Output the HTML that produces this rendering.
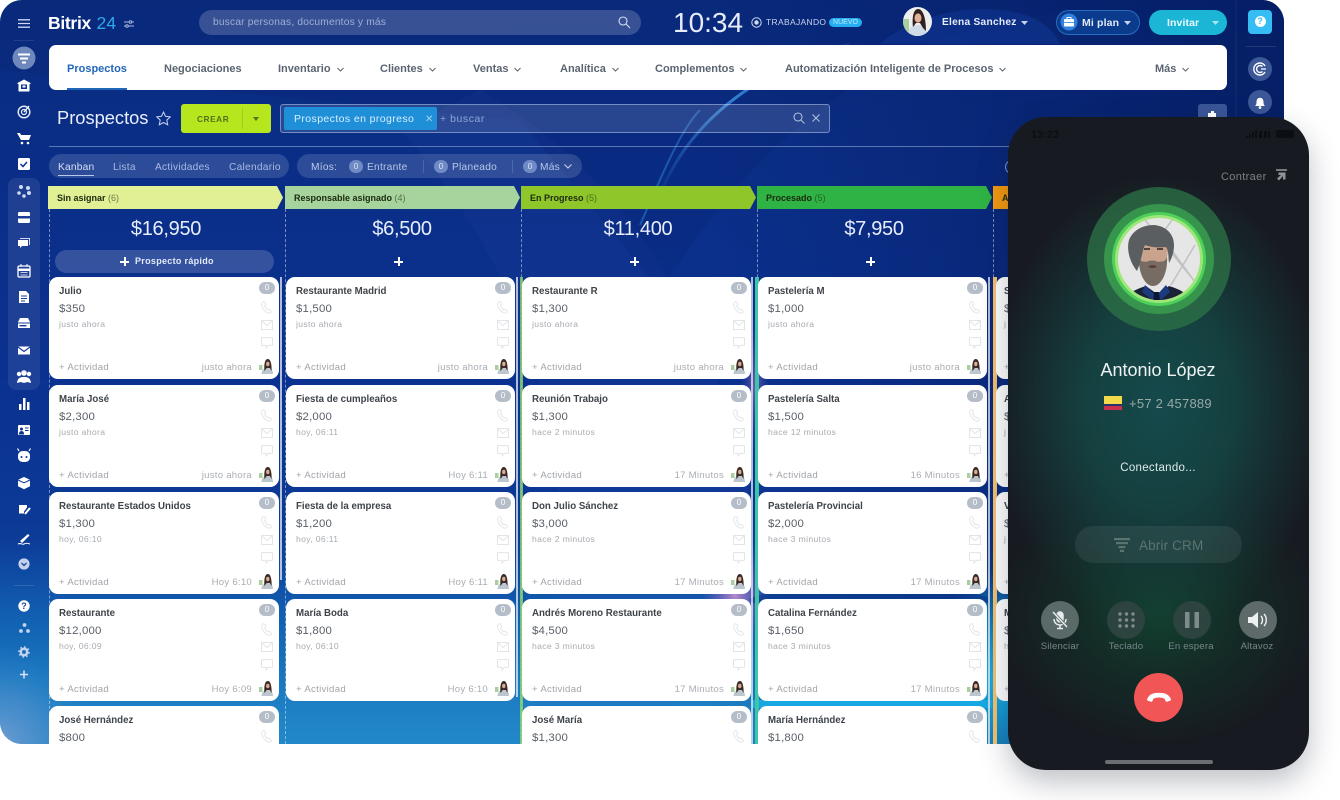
<!DOCTYPE html>
<html lang="es"><head><meta charset="utf-8"><title>Bitrix 24</title>
<style>
html,body{margin:0;padding:0;background:#fff}
body{width:1340px;height:800px;position:relative;overflow:hidden;font-family:"Liberation Sans",sans-serif}
*{box-sizing:border-box}
.a{position:absolute;white-space:nowrap}
#app{position:absolute;left:0;top:0;width:1284px;height:744px;border-radius:22px;overflow:hidden;background:linear-gradient(180deg,#0a2c80 0,#0b3190 50%,#0c3a97 72%,#1263b3 84%,#1c7cc2 93%,#2288c8 100%)}
.nav{position:absolute;top:63px;font-size:11px;line-height:13px;font-weight:bold;color:#5b6470;white-space:nowrap}
.nav svg{margin-left:6px;vertical-align:0}
.stage{position:absolute;top:186px;height:23px;width:235px;clip-path:polygon(0 0,229px 0,235px 11.5px,229px 23px,0 23px);font-size:9px;line-height:24px;font-weight:bold;color:#1c2a10;padding-left:9px;white-space:nowrap}
.stage i{font-style:normal;font-weight:normal;opacity:.6}
.total{position:absolute;top:217px;width:230px;text-align:center;color:#e8eefc;font-size:20px;line-height:24px;letter-spacing:-.3px}
.dash{position:absolute;top:209px;height:535px;width:0;border-left:1px dashed rgba(255,255,255,.45)}
.bar{position:absolute;top:277px;width:2px;height:303px;background:rgba(235,238,242,.75)}
.plus{position:absolute;top:257px;width:9px;height:9px;background:linear-gradient(#fff,#fff) center/9px 2px no-repeat,linear-gradient(#fff,#fff) center/2px 9px no-repeat}
.c{position:absolute;width:230px;height:102px;background:#fff;border-radius:9px;color:#333}
.c>*{position:absolute;white-space:nowrap}
.c.x{width:229px}
.t{left:10px;top:8px;font-size:9.7px;line-height:13px;font-weight:bold;color:#3f444a}
.p{left:10px;top:25px;font-size:11.4px;line-height:14px;color:#5a6068;letter-spacing:.2px}
.h{left:10px;top:41px;font-size:8.6px;line-height:12px;color:#a7abb0;letter-spacing:.35px}
.d{left:10px;top:84px;font-size:9.6px;line-height:13px;color:#a0a4a9;letter-spacing:.3px}
.r{right:27px;top:84px;font-size:9.6px;line-height:13px;color:#a9adb2;letter-spacing:.25px}
.b{left:210px;top:5px;width:16px;height:12px;border-radius:6px;background:#b5bdc8;color:#fff;font-size:8px;line-height:12px;text-align:center}
.i1{left:212px;top:24px}.i2{left:212px;top:43px}.i3{left:212px;top:60px}.av{left:209px;top:81px}
.x .b{left:209px}.x .i1,.x .i2,.x .i3{left:211px}.x .av{left:208px}
.y .t,.y .p,.y .h,.y .d{left:8px}
.rb{position:absolute;top:601px;width:38px;height:38px;border-radius:50%}
.rl{position:absolute;top:641px;width:70px;text-align:center;font-size:9.6px;line-height:12px;color:#78858a;letter-spacing:.2px}
</style></head>
<body>
<svg width="0" height="0" style="position:absolute">
<defs>
<symbol id="ph" viewBox="0 0 12 13"><path d="M1.5 1.2c1-.7 1.900-.6 2.400.3l.7 1.500c.2.500 0 1-.5 1.300l-.5.400c.6 1.700 1.700 3.100 3.300 4.200l.6-.4c.5-.3 1-.2 1.400.2l1.100 1.100c.6.7.4 1.500-.4 2-1.200.8-3 .3-4.900-1.200C2.200 8.700.4 5.500.6 3c0-.8.400-1.400.9-1.800z" fill="none" stroke="#e2e4e8" stroke-width=".9"/></symbol>
<symbol id="ml" viewBox="0 0 12 10"><rect x=".5" y=".5" width="11" height="9" fill="none" stroke="#e2e4e8"/><path d="M.8 1l5.200 4.500L11.200 1" fill="none" stroke="#e2e4e8"/></symbol>
<symbol id="ch" viewBox="0 0 12 12"><path d="M1 .6h10c.3 0 .5.200.5.500v6.800c0 .3-.2.500-.5.500H7.200L5 11V8.400H1c-.3 0-.5-.2-.5-.5V1.100c0-.3.200-.5.500-.5z" fill="none" stroke="#e2e4e8"/></symbol>
<symbol id="av" viewBox="0 0 16 16"><rect x="1" y="7" width="3.500" height="5" fill="#a9cf9f"/><path d="M3.500 16c0-3.500 2-6 6-6s5.500 2.500 5.500 6z" fill="#bcc6cf"/><path d="M6.500 13c-.5-4-.3-12 3.200-12s4 7 4 12l-2-3-3 0z" fill="#3b2a26"/><ellipse cx="9.800" cy="6" rx="1.700" ry="2.200" fill="#d9ac92"/></symbol>
</defs>
</svg>

<div id="app">
<svg class="a" style="left:0;top:0" width="1284" height="744" viewBox="0 0 1284 744">
<defs>
<linearGradient id="dk" x1="0" x2="1" y1="0" y2="0"><stop offset=".55" stop-color="#061f68" stop-opacity="0"/><stop offset="1" stop-color="#051c60" stop-opacity=".85"/></linearGradient>
<radialGradient id="pk"><stop offset="0" stop-color="#c98fd0" stop-opacity=".9"/><stop offset="1" stop-color="#7a50c0" stop-opacity="0"/></radialGradient>
<radialGradient id="bl" cx="0" cy="1" r="1"><stop offset="0" stop-color="#6f9dd2"/><stop offset=".5" stop-color="#4f8ecb" stop-opacity=".6"/><stop offset="1" stop-color="#1f80c4" stop-opacity="0"/></radialGradient>
<radialGradient id="cy"><stop offset="0" stop-color="#16b4e8"/><stop offset="1" stop-color="#16b4e8" stop-opacity="0"/></radialGradient>
<linearGradient id="al" x1="0" x2="1" y1="1" y2="0"><stop offset="0" stop-color="#2f7fd8" stop-opacity=".1"/><stop offset=".5" stop-color="#3a8fe0" stop-opacity=".85"/><stop offset="1" stop-color="#3a8fe0" stop-opacity=".1"/></linearGradient>
</defs>
<rect width="1284" height="744" fill="url(#dk)"/>
<path d="M0 0H1284V44C1120 -10 980 10 880 70C770 130 700 230 660 290L520 120L0 70Z" fill="#071f6a" opacity=".2"/>
<path d="M480 90C640 180 760 380 760 620L640 744H520C600 560 560 300 400 130Z" fill="#3a5fb8" opacity=".08"/>
<path d="M662 190C700 100 790 60 850 44" fill="none" stroke="url(#al)" stroke-width="3"/>
<path d="M640 225C660 180 680 130 700 110" fill="none" stroke="#2a77cc" stroke-width="2" opacity=".6"/>
<path d="M880 44C930 0 1040 -5 1060 44" fill="#123a9c" opacity=".45"/>
<ellipse cx="735" cy="595" rx="34" ry="60" fill="url(#pk)"/>
<ellipse cx="755" cy="385" rx="14" ry="70" fill="url(#pk)" opacity=".55"/>
<rect x="0" y="644" width="100" height="100" fill="url(#bl)"/>
<ellipse cx="1000" cy="680" rx="70" ry="110" fill="url(#cy)"/>
<ellipse cx="870" cy="600" rx="120" ry="12" fill="#0a2c80" opacity=".5"/>
<rect x="752" y="700" width="240" height="8" fill="#16a8e0"/>
<line x1="1236" y1="0" x2="1236" y2="744" stroke="#fff" stroke-opacity=".06"/>
</svg>

<!-- top bar -->
<svg class="a" style="left:18px;top:19px" width="12" height="9"><path d="M0 .8h12M0 4.500h12M0 8.200h12" stroke="#cdd8f0" stroke-width="1.300"/></svg>
<div class="a" style="left:48px;top:11px;font-size:17.500px;line-height:24px;font-weight:bold;color:#fff;letter-spacing:-.3px">Bitrix <span style="color:#2fa8ee;font-weight:normal;letter-spacing:.2px;margin-left:1px">24</span></div>
<svg class="a" style="left:124px;top:20px" width="10" height="8"><path d="M0 2h10M0 6h10" stroke="#a8b8dc"/><circle cx="6.500" cy="2" r="1.300" fill="#0a2c80" stroke="#a8b8dc"/><circle cx="3" cy="6" r="1.300" fill="#0a2c80" stroke="#a8b8dc"/></svg>
<div class="a" style="left:199px;top:10px;width:442px;height:25px;border-radius:13px;background:rgba(255,255,255,.19)"></div>
<div class="a" style="left:213px;top:16px;font-size:10.200px;line-height:14px;color:#9eb0d6;letter-spacing:.2px">buscar personas, documentos y más</div>
<svg class="a" style="left:618px;top:16px" width="13" height="13" fill="none" stroke="#d5deef" stroke-width="1.100"><circle cx="5" cy="5" r="4"/><path d="M8 8l4 4"/></svg>
<div class="a" style="left:673px;top:6px;font-size:28px;line-height:34px;color:#e6ecfb">10:34</div>
<svg class="a" style="left:751px;top:17px" width="11" height="11" fill="none"><circle cx="5.500" cy="5.500" r="4.700" stroke="#d0dbf2"/><circle cx="5.500" cy="5.500" r="2.200" fill="#d0dbf2"/></svg>
<div class="a" style="left:766px;top:16px;font-size:8.500px;line-height:13px;color:#c8d4ee;letter-spacing:.32px">TRABAJANDO</div>
<div class="a" style="left:829px;top:18px;width:33px;height:9px;border-radius:5px;background:#26aef2;color:#bfeaff;font-size:7px;line-height:9px;text-align:center">NUEVO</div>
<svg class="a" style="left:903px;top:7px" width="29" height="29" viewBox="0 0 29 29"><defs><clipPath id="ca"><circle cx="14.500" cy="14.500" r="14.500"/></clipPath></defs><g clip-path="url(#ca)"><rect width="29" height="29" fill="#eef0f0"/><rect x="0" y="12" width="6" height="14" fill="#a9cf9f"/><path d="M5 29c0-7 3-11 10-11s9 4 9 11z" fill="#cfdbe6"/><path d="M10 20C9 12 10 2 15 2s8 9 8 22l-3-3-3-5h-4z" fill="#33211d"/><ellipse cx="15" cy="11" rx="3.500" ry="4.600" fill="#dfb29a"/></g></svg>
<div class="a" style="left:942px;top:16px;font-size:10.200px;line-height:14px;font-weight:bold;color:#e6edfb;letter-spacing:.25px">Elena Sanchez</div>
<svg class="a" style="left:1021px;top:21px" width="7" height="4"><path d="M0 0h7L3.500 4z" fill="#c7d3ee"/></svg>
<div class="a" style="left:1056px;top:10px;width:84px;height:25px;border-radius:13px;border:1px solid #2a6cc0;background:#0b3b8c"></div>
<svg class="a" style="left:1060px;top:13px" width="18" height="18"><circle cx="9" cy="9" r="8.500" fill="#2f80e0"/><rect x="4" y="6" width="10" height="7.500" rx="1" fill="#fff"/><rect x="7" y="4.500" width="4" height="2" fill="none" stroke="#fff"/><path d="M4 9.500h10" stroke="#2f80e0" stroke-width=".8"/></svg>
<div class="a" style="left:1082px;top:16px;font-size:10.500px;line-height:14px;font-weight:bold;color:#dfe9fb;letter-spacing:.15px">Mi plan</div>
<svg class="a" style="left:1124px;top:21px" width="7" height="4"><path d="M0 0h7L3.500 4z" fill="#c7d3ee"/></svg>
<div class="a" style="left:1149px;top:10px;width:78px;height:25px;border-radius:13px;background:#1bb5d6"></div>
<div class="a" style="left:1167px;top:16px;font-size:10.500px;line-height:14px;font-weight:bold;color:#e8fbff;letter-spacing:.1px">Invitar</div>
<svg class="a" style="left:1212px;top:21px" width="7" height="4"><path d="M0 0h7L3.500 4z" fill="#a9e6f2"/></svg>

<!-- right rail -->
<div class="a" style="left:1248px;top:10px;width:24px;height:24px;border-radius:4px;background:#36bdf4"></div>
<div class="a" style="left:1254.500px;top:16px;width:11px;height:11px;border-radius:50%;background:#fff;color:#36bdf4;font-size:9px;line-height:11px;font-weight:bold;text-align:center">?</div>
<div class="a" style="left:1246px;top:46px;width:30px;height:1px;background:rgba(255,255,255,.12)"></div>
<svg class="a" style="left:1248px;top:57px" width="24" height="24"><circle cx="12" cy="12" r="12" fill="#3b5797"/><path d="M17 9a6 6 0 1 0 0 6M14.500 9.500a3.500 3.500 0 1 0 0 5" fill="none" stroke="#fff" stroke-width="1.400"/><path d="M13 12h5" stroke="#fff" stroke-width="1.300"/></svg>
<svg class="a" style="left:1248px;top:90px" width="24" height="24"><circle cx="12" cy="12" r="12" fill="#3b5797"/><path d="M7 16c1.200-1 1.500-2 1.500-4.200 0-2.200 1.400-4 3.500-4s3.500 1.800 3.500 4c0 2.200.3 3.200 1.500 4.200z" fill="#fff"/><circle cx="12" cy="17.500" r="1.400" fill="#fff"/></svg>

<!-- nav panel -->
<div class="a" style="left:49px;top:45px;width:1178px;height:45px;border-radius:7px;background:#fff"></div>
<div class="a" style="left:67px;top:88px;width:60px;height:2px;background:#2067b8"></div>
<div class="nav" style="left:67px;color:#2067b8">Prospectos</div>
<div class="nav" style="left:164px">Negociaciones</div>
<div class="nav" style="left:278px">Inventario<svg width="7" height="5"><path d="M.5 1l3 3 3-3" fill="none" stroke="#5b6470"/></svg></div>
<div class="nav" style="left:380px">Clientes<svg width="7" height="5"><path d="M.5 1l3 3 3-3" fill="none" stroke="#5b6470"/></svg></div>
<div class="nav" style="left:473px">Ventas<svg width="7" height="5"><path d="M.5 1l3 3 3-3" fill="none" stroke="#5b6470"/></svg></div>
<div class="nav" style="left:560px">Analítica<svg width="7" height="5"><path d="M.5 1l3 3 3-3" fill="none" stroke="#5b6470"/></svg></div>
<div class="nav" style="left:655px">Complementos<svg width="7" height="5"><path d="M.5 1l3 3 3-3" fill="none" stroke="#5b6470"/></svg></div>
<div class="nav" style="left:785px">Automatización Inteligente de Procesos<svg width="7" height="5"><path d="M.5 1l3 3 3-3" fill="none" stroke="#5b6470"/></svg></div>
<div class="nav" style="left:1155px">Más<svg width="7" height="5"><path d="M.5 1l3 3 3-3" fill="none" stroke="#5b6470"/></svg></div>

<!-- toolbar -->
<div class="a" style="left:57px;top:105px;font-size:18.300px;line-height:26px;color:#e9effd">Prospectos</div>
<svg class="a" style="left:156px;top:111px" width="15" height="15" viewBox="0 0 15 15"><path d="M7.500 1l2 4.300 4.700.6-3.400 3.200.9 4.700-4.200-2.300-4.200 2.300.9-4.700L.8 5.900l4.700-.6z" fill="none" stroke="#c9d5f0"/></svg>
<div class="a" style="left:181px;top:104px;width:90px;height:29px;border-radius:3px;background:#b6e61e"></div>
<div class="a" style="left:197px;top:113px;font-size:8.300px;line-height:13px;font-weight:bold;color:#56701a;letter-spacing:.55px">CREAR</div>
<div class="a" style="left:242px;top:108px;width:1px;height:21px;background:#a3cc20"></div>
<svg class="a" style="left:253px;top:117px" width="6" height="4"><path d="M0 0h6L3 4z" fill="#56701a"/></svg>
<div class="a" style="left:280px;top:104px;width:550px;height:29px;border-radius:3px;background:rgba(255,255,255,.13);border:1px solid rgba(190,210,245,.5)"></div>
<div class="a" style="left:284px;top:107px;width:153px;height:23px;border-radius:2px;background:#1f8fd8"></div>
<div class="a" style="left:294px;top:112px;font-size:10.500px;line-height:14px;color:#d8efff;letter-spacing:.4px">Prospectos en progreso</div>
<div class="a" style="left:425px;top:113px;font-size:10px;line-height:14px;color:#9dd2f2">✕</div>
<div class="a" style="left:440px;top:112px;font-size:10.500px;line-height:14px;color:#8ea6d2;letter-spacing:.55px">+ buscar</div>
<svg class="a" style="left:793px;top:112px" width="12" height="12" fill="none" stroke="#aebfdf" stroke-width="1.100"><circle cx="5" cy="5" r="4"/><path d="M8 8l3.500 3.500"/></svg>
<svg class="a" style="left:812px;top:114px" width="8" height="8" stroke="#aebfdf" stroke-width="1.100"><path d="M.5.500l7 7M7.500.500l-7 7"/></svg>
<div class="a" style="left:1198px;top:104px;width:29px;height:29px;border-radius:3px;background:#3a5697"></div>
<div class="a" style="left:1208px;top:113px;width:8px;height:5px;background:#fff"></div>
<div class="a" style="left:1210.500px;top:111px;width:3px;height:3px;background:#fff"></div>
<div class="a" style="left:49px;top:146px;width:960px;height:1px;background:rgba(190,210,245,.45)"></div>

<div class="a" style="left:49px;top:154px;width:240px;height:24px;border-radius:12px;background:rgba(255,255,255,.14)"></div>
<div class="a" style="left:58px;top:161px;font-size:10.200px;line-height:13px;color:#d5e0f6;letter-spacing:.2px;border-bottom:1px solid #b8c8e8;padding-bottom:1px">Kanban</div>
<div class="a" style="left:113px;top:161px;font-size:10.200px;line-height:13px;color:#a8bbe0;letter-spacing:.25px">Lista</div>
<div class="a" style="left:155px;top:161px;font-size:10.200px;line-height:13px;color:#a8bbe0;letter-spacing:.25px">Actividades</div>
<div class="a" style="left:229px;top:161px;font-size:10.200px;line-height:13px;color:#a8bbe0;letter-spacing:.25px">Calendario</div>
<div class="a" style="left:297px;top:154px;width:285px;height:24px;border-radius:12px;background:rgba(255,255,255,.14)"></div>
<div class="a" style="left:311px;top:161px;font-size:10.200px;line-height:13px;color:#bccbe8;letter-spacing:.25px">Míos:</div>
<div class="a" style="left:349px;top:160px;width:14px;height:13px;border-radius:7px;background:#6f8ac4;color:#dfe8f8;font-size:8px;line-height:13px;text-align:center">0</div>
<div class="a" style="left:367px;top:161px;font-size:10.200px;line-height:13px;color:#b8c8e6;letter-spacing:.25px">Entrante</div>
<div class="a" style="left:423px;top:160px;width:1px;height:13px;background:rgba(255,255,255,.15)"></div>
<div class="a" style="left:434px;top:160px;width:14px;height:13px;border-radius:7px;background:#6f8ac4;color:#dfe8f8;font-size:8px;line-height:13px;text-align:center">0</div>
<div class="a" style="left:452px;top:161px;font-size:10.200px;line-height:13px;color:#b8c8e6;letter-spacing:.25px">Planeado</div>
<div class="a" style="left:512px;top:160px;width:1px;height:13px;background:rgba(255,255,255,.15)"></div>
<div class="a" style="left:523px;top:160px;width:14px;height:13px;border-radius:7px;background:#6f8ac4;color:#dfe8f8;font-size:8px;line-height:13px;text-align:center">0</div>
<div class="a" style="left:540px;top:161px;font-size:10.200px;line-height:13px;color:#b8c8e6;letter-spacing:.25px">Más</div>
<svg class="a" style="left:564px;top:164px" width="8" height="5"><path d="M.5.500l3.500 3.500L7.500.500" fill="none" stroke="#c2d0ea" stroke-width="1.100"/></svg>
<div class="a" style="left:1005px;top:160px;width:8px;height:14px;border-radius:7px 0 0 7px;border:1px solid #7f95c4;border-right:0"></div>

<!-- sidebar -->
<div class="a" style="left:8px;top:178px;width:32px;height:212px;border-radius:8px;background:rgba(255,255,255,.08)"></div>
<div class="a" style="left:14px;top:40px;width:20px;height:1px;background:rgba(255,255,255,.1)"></div>
<svg class="a" style="left:0;top:0" width="48" height="700" fill="#fff">
<circle cx="24" cy="58" r="11.500" fill="#6e87bc"/><path d="M18 53.500h12v2H18zM20 57.500h8v2h-8zM22 61.500h4v2h-4z" fill="#fff"/>
<path d="M17.500 83l6.500-3.500 6.500 3.500v1h-1v7.500h-11V84h-1z"/><rect x="21" y="84.500" width="6" height="4.500" fill="#0b3191"/><rect x="22.500" y="85.500" width="3" height="2" fill="#fff"/>
<circle cx="24" cy="112" r="5.800" fill="none" stroke="#dfe7f8" stroke-width="1.500"/><circle cx="24" cy="112" r="2.500" fill="none" stroke="#dfe7f8" stroke-width="1.300"/><path d="M24 112l5-6" stroke="#fff" stroke-width="1.300"/>
<path d="M17 133h3l1 2h10l-2 5h-8z"/><circle cx="22" cy="143" r="1.300"/><circle cx="28" cy="143" r="1.300"/>
<rect x="18" y="158" width="12" height="12" rx="1.500"/><path d="M20.500 164l2.500 2.500 4-4.500" fill="none" stroke="#0b3191" stroke-width="1.500"/>
<g fill="#d0dbf2"><circle cx="21" cy="187" r="2"/><circle cx="28" cy="188" r="2"/><circle cx="19" cy="193" r="1.800"/><circle cx="29" cy="193" r="2"/><circle cx="24" cy="196" r="1.800"/></g>
<rect x="18" y="212" width="12" height="11" rx="1.200"/><rect x="18" y="216" width="12" height="2.500" fill="#1a3d96"/>
<path d="M18 240h10v6h-6l-2 2v-2h-2z"/><path d="M20 238h10v7h-1v-6h-9z" opacity=".8"/>
<rect x="18" y="266" width="12" height="11" rx="1.300" fill="none" stroke="#fff" stroke-width="1.300"/><path d="M18 269h12v1.500H18zM21 264v3M27 264v3" stroke="#fff"/><path d="M20.500 272.500h7M20.500 275h7" stroke="#fff" stroke-width=".8"/>
<path d="M19 291h7l3 3v9H19z"/><path d="M21 296h6M21 298.500h6M21 301h4" stroke="#1a3d96"/>
<path d="M18 322l2-4h8l2 4v6H18z"/><path d="M18 323h12" stroke="#1a3d96"/><rect x="19.500" y="325" width="7" height="1.400" fill="#1a3d96"/>
<path d="M18 346.500h12v8H18z"/><path d="M18 347l6 4.500 6-4.500" fill="none" stroke="#1a3d96" stroke-width="1.200"/>
<circle cx="24" cy="373" r="2.800"/><circle cx="19" cy="374" r="2.200"/><circle cx="29" cy="374" r="2.200"/><path d="M17 383c.5-5 3-6 7-6s6.500 1 7 6l-3.500-1-3.500 1-3.500-1z"/>
<path d="M19 404h2.500v6H19zM23 398h2.500v12H23zM27 402h2.500v8H27z"/>
<rect x="18" y="425" width="12" height="10" rx="1"/><circle cx="21.500" cy="429" r="1.500" fill="#0b3191"/><path d="M19.500 434c0-2 1-2.500 2-2.500s2 .5 2 2.500zM25 428h3.500M25 430.500h3.500" fill="#0b3191" stroke="#0b3191"/>
<path d="M19 451l-1.500-2.500M29 451l1.500-2.500" stroke="#fff" stroke-width="1.200"/><rect x="18" y="451" width="12" height="11" rx="4.500"/><circle cx="21.500" cy="457" r="1" fill="#0b3191"/><circle cx="26.500" cy="457" r="1" fill="#0b3191"/>
<path d="M24 477l6 2.800v6.400l-6 3-6-3v-6.400z"/><path d="M18 480l6 2.800 6-2.800" fill="none" stroke="#0f3799"/>
<path d="M19 505h8v2.500l-3 4v2h-5z"/><path d="M25 514l5-6" stroke="#fff" stroke-width="2"/>
<path d="M20 541l8-7 1.500 1.500-7.500 7.500z"/><path d="M18 544c3-1.500 4 1 6 0s3-1 6 0" fill="none" stroke="#fff"/>
<circle cx="24" cy="564" r="5.600" fill="#c4d0ec"/><path d="M21.500 563l2.500 2.500 2.500-2.500" fill="none" stroke="#19439f" stroke-width="1.300"/>
<rect x="14" y="585" width="20" height="1" fill="#fff" opacity=".12"/>
<circle cx="24" cy="606" r="5.700"/>
<circle cx="24.500" cy="625" r="1.900" fill="#c4d2ee"/><circle cx="21" cy="631" r="1.900" fill="#c4d2ee"/><circle cx="28" cy="631" r="1.900" fill="#c4d2ee"/>
<circle cx="24" cy="652" r="3.200" fill="none" stroke="#c4d2ee" stroke-width="2.500"/><circle cx="24" cy="652" r="5" fill="none" stroke="#c4d2ee" stroke-width="1.500" stroke-dasharray="1.800 2.100"/>
<path d="M20 674.500h8M24 670.500v8" stroke="#d6e3f5" stroke-width="1.500"/>
</svg>
<div class="a" style="left:18px;top:600px;width:12px;height:12px;color:#19439f;font-size:9px;line-height:12px;font-weight:bold;text-align:center">?</div>

<!-- stages -->
<div class="stage" style="left:48px;background:#e1ef95">Sin asignar <i>(6)</i></div>
<div class="stage" style="left:285px;background:#a6d49c">Responsable asignado <i>(4)</i></div>
<div class="stage" style="left:521px;background:#8fc72a">En Progreso <i>(5)</i></div>
<div class="stage" style="left:757px;background:#2fb344">Procesado <i>(5)</i></div>
<div class="stage" style="left:993px;background:#f59a0e">A</div>
<div class="dash" style="left:49px"></div><div class="dash" style="left:285px"></div><div class="dash" style="left:521px"></div><div class="dash" style="left:757px"></div><div class="dash" style="left:993px"></div>
<div class="total" style="left:51px">$16,950</div>
<div class="total" style="left:287px">$6,500</div>
<div class="total" style="left:523px">$11,400</div>
<div class="total" style="left:759px">$7,950</div>
<div class="a" style="left:55px;top:250px;width:219px;height:23px;border-radius:12px;background:rgba(255,255,255,.17)"></div>
<div class="plus" style="left:120px"></div>
<div class="a" style="left:135px;top:255px;font-size:9px;line-height:13px;font-weight:bold;color:#e3ebfa;letter-spacing:.3px">Prospecto rápido</div>
<div class="plus" style="left:394px"></div><div class="plus" style="left:630px"></div><div class="plus" style="left:866px"></div>
<div class="bar" style="left:280px"></div><div class="bar" style="left:516px;height:420px"></div><div class="bar" style="left:751px;height:467px"></div><div class="bar" style="left:988px;height:467px"></div>
<div class="a" style="left:520px;top:277px;width:3px;height:467px;background:#8fd86a;opacity:.8"></div>
<div class="a" style="left:755px;top:277px;width:4px;height:467px;background:#3ec4a8"></div>
<div class="a" style="left:993px;top:277px;width:4px;height:467px;background:#f3c26c"></div>

<!-- column 1 -->
<div class="c" style="left:49px;top:277px"><span class="t">Julio</span><span class="p">$350</span><span class="h">justo ahora</span><span class="d">+ Actividad</span><span class="r">justo ahora</span><span class="b">0</span><svg class="i1" width="12" height="13"><use href="#ph"/></svg><svg class="i2" width="12" height="10"><use href="#ml"/></svg><svg class="i3" width="12" height="12"><use href="#ch"/></svg><svg class="av" width="16" height="16"><use href="#av"/></svg></div>
<div class="c" style="left:49px;top:384.500px"><span class="t">María José</span><span class="p">$2,300</span><span class="h">justo ahora</span><span class="d">+ Actividad</span><span class="r">justo ahora</span><span class="b">0</span><svg class="i1" width="12" height="13"><use href="#ph"/></svg><svg class="i2" width="12" height="10"><use href="#ml"/></svg><svg class="i3" width="12" height="12"><use href="#ch"/></svg><svg class="av" width="16" height="16"><use href="#av"/></svg></div>
<div class="c" style="left:49px;top:492px"><span class="t">Restaurante Estados Unidos</span><span class="p">$1,300</span><span class="h">hoy, 06:10</span><span class="d">+ Actividad</span><span class="r">Hoy 6:10</span><span class="b">0</span><svg class="i1" width="12" height="13"><use href="#ph"/></svg><svg class="i2" width="12" height="10"><use href="#ml"/></svg><svg class="i3" width="12" height="12"><use href="#ch"/></svg><svg class="av" width="16" height="16"><use href="#av"/></svg></div>
<div class="c" style="left:49px;top:599px"><span class="t">Restaurante</span><span class="p">$12,000</span><span class="h">hoy, 06:09</span><span class="d">+ Actividad</span><span class="r">Hoy 6:09</span><span class="b">0</span><svg class="i1" width="12" height="13"><use href="#ph"/></svg><svg class="i2" width="12" height="10"><use href="#ml"/></svg><svg class="i3" width="12" height="12"><use href="#ch"/></svg><svg class="av" width="16" height="16"><use href="#av"/></svg></div>
<div class="c" style="left:49px;top:706px"><span class="t">José Hernández</span><span class="p">$800</span><span class="b">0</span><svg class="i1" width="12" height="13"><use href="#ph"/></svg></div>

<!-- column 2 -->
<div class="c x" style="left:286px;top:277px"><span class="t">Restaurante Madrid</span><span class="p">$1,500</span><span class="h">justo ahora</span><span class="d">+ Actividad</span><span class="r">justo ahora</span><span class="b">0</span><svg class="i1" width="12" height="13"><use href="#ph"/></svg><svg class="i2" width="12" height="10"><use href="#ml"/></svg><svg class="i3" width="12" height="12"><use href="#ch"/></svg><svg class="av" width="16" height="16"><use href="#av"/></svg></div>
<div class="c x" style="left:286px;top:384.500px"><span class="t">Fiesta de cumpleaños</span><span class="p">$2,000</span><span class="h">hoy, 06:11</span><span class="d">+ Actividad</span><span class="r">Hoy 6:11</span><span class="b">0</span><svg class="i1" width="12" height="13"><use href="#ph"/></svg><svg class="i2" width="12" height="10"><use href="#ml"/></svg><svg class="i3" width="12" height="12"><use href="#ch"/></svg><svg class="av" width="16" height="16"><use href="#av"/></svg></div>
<div class="c x" style="left:286px;top:492px"><span class="t">Fiesta de la empresa</span><span class="p">$1,200</span><span class="h">hoy, 06:11</span><span class="d">+ Actividad</span><span class="r">Hoy 6:11</span><span class="b">0</span><svg class="i1" width="12" height="13"><use href="#ph"/></svg><svg class="i2" width="12" height="10"><use href="#ml"/></svg><svg class="i3" width="12" height="12"><use href="#ch"/></svg><svg class="av" width="16" height="16"><use href="#av"/></svg></div>
<div class="c x" style="left:286px;top:599px"><span class="t">María Boda</span><span class="p">$1,800</span><span class="h">hoy, 06:10</span><span class="d">+ Actividad</span><span class="r">Hoy 6:10</span><span class="b">0</span><svg class="i1" width="12" height="13"><use href="#ph"/></svg><svg class="i2" width="12" height="10"><use href="#ml"/></svg><svg class="i3" width="12" height="12"><use href="#ch"/></svg><svg class="av" width="16" height="16"><use href="#av"/></svg></div>

<!-- column 3 -->
<div class="c x" style="left:522px;top:277px"><span class="t">Restaurante R</span><span class="p">$1,300</span><span class="h">justo ahora</span><span class="d">+ Actividad</span><span class="r">justo ahora</span><span class="b">0</span><svg class="i1" width="12" height="13"><use href="#ph"/></svg><svg class="i2" width="12" height="10"><use href="#ml"/></svg><svg class="i3" width="12" height="12"><use href="#ch"/></svg><svg class="av" width="16" height="16"><use href="#av"/></svg></div>
<div class="c x" style="left:522px;top:384.500px"><span class="t">Reunión Trabajo</span><span class="p">$1,300</span><span class="h">hace 2 minutos</span><span class="d">+ Actividad</span><span class="r">17 Minutos</span><span class="b">0</span><svg class="i1" width="12" height="13"><use href="#ph"/></svg><svg class="i2" width="12" height="10"><use href="#ml"/></svg><svg class="i3" width="12" height="12"><use href="#ch"/></svg><svg class="av" width="16" height="16"><use href="#av"/></svg></div>
<div class="c x" style="left:522px;top:492px"><span class="t">Don Julio Sánchez</span><span class="p">$3,000</span><span class="h">hace 2 minutos</span><span class="d">+ Actividad</span><span class="r">17 Minutos</span><span class="b">0</span><svg class="i1" width="12" height="13"><use href="#ph"/></svg><svg class="i2" width="12" height="10"><use href="#ml"/></svg><svg class="i3" width="12" height="12"><use href="#ch"/></svg><svg class="av" width="16" height="16"><use href="#av"/></svg></div>
<div class="c x" style="left:522px;top:599px"><span class="t">Andrés Moreno Restaurante</span><span class="p">$4,500</span><span class="h">hace 3 minutos</span><span class="d">+ Actividad</span><span class="r">17 Minutos</span><span class="b">0</span><svg class="i1" width="12" height="13"><use href="#ph"/></svg><svg class="i2" width="12" height="10"><use href="#ml"/></svg><svg class="i3" width="12" height="12"><use href="#ch"/></svg><svg class="av" width="16" height="16"><use href="#av"/></svg></div>
<div class="c x" style="left:522px;top:706px"><span class="t">José María</span><span class="p">$1,300</span><span class="b">0</span><svg class="i1" width="12" height="13"><use href="#ph"/></svg></div>

<!-- column 4 -->
<div class="c x" style="left:758px;top:277px"><span class="t">Pastelería M</span><span class="p">$1,000</span><span class="h">justo ahora</span><span class="d">+ Actividad</span><span class="r">justo ahora</span><span class="b">0</span><svg class="i1" width="12" height="13"><use href="#ph"/></svg><svg class="i2" width="12" height="10"><use href="#ml"/></svg><svg class="i3" width="12" height="12"><use href="#ch"/></svg><svg class="av" width="16" height="16"><use href="#av"/></svg></div>
<div class="c x" style="left:758px;top:384.500px"><span class="t">Pastelería Salta</span><span class="p">$1,500</span><span class="h">hace 12 minutos</span><span class="d">+ Actividad</span><span class="r">16 Minutos</span><span class="b">0</span><svg class="i1" width="12" height="13"><use href="#ph"/></svg><svg class="i2" width="12" height="10"><use href="#ml"/></svg><svg class="i3" width="12" height="12"><use href="#ch"/></svg><svg class="av" width="16" height="16"><use href="#av"/></svg></div>
<div class="c x" style="left:758px;top:492px"><span class="t">Pastelería Provincial</span><span class="p">$2,000</span><span class="h">hace 3 minutos</span><span class="d">+ Actividad</span><span class="r">17 Minutos</span><span class="b">0</span><svg class="i1" width="12" height="13"><use href="#ph"/></svg><svg class="i2" width="12" height="10"><use href="#ml"/></svg><svg class="i3" width="12" height="12"><use href="#ch"/></svg><svg class="av" width="16" height="16"><use href="#av"/></svg></div>
<div class="c x" style="left:758px;top:599px"><span class="t">Catalina Fernández</span><span class="p">$1,650</span><span class="h">hace 3 minutos</span><span class="d">+ Actividad</span><span class="r">17 Minutos</span><span class="b">0</span><svg class="i1" width="12" height="13"><use href="#ph"/></svg><svg class="i2" width="12" height="10"><use href="#ml"/></svg><svg class="i3" width="12" height="12"><use href="#ch"/></svg><svg class="av" width="16" height="16"><use href="#av"/></svg></div>
<div class="c x" style="left:758px;top:706px"><span class="t">María Hernández</span><span class="p">$1,800</span><span class="b">0</span><svg class="i1" width="12" height="13"><use href="#ph"/></svg></div>

<!-- column 5 (mostly hidden) -->
<div class="c y" style="left:996px;top:277px"><span class="t">S</span><span class="p">$</span><span class="h">j</span><span class="d">+</span></div>
<div class="c y" style="left:996px;top:384.500px"><span class="t">A</span><span class="p">$</span><span class="h">j</span><span class="d">+</span></div>
<div class="c y" style="left:996px;top:492px"><span class="t">V</span><span class="p">$</span><span class="h">j</span><span class="d">+</span></div>
<div class="c y" style="left:996px;top:599px"><span class="t">M</span><span class="p">$</span><span class="h">h</span><span class="d">+</span></div>
</div>

<!-- phone -->
<div class="a" style="left:1008px;top:117px;width:301px;height:653px;border-radius:38px;overflow:hidden;box-shadow:0 12px 30px rgba(20,30,50,.28);background:radial-gradient(ellipse 165px 230px at 50% 44%,#154a4c 0,#15403f 45%,rgba(21,40,44,0) 100%),radial-gradient(ellipse 160px 130px at 50% 76%,#12402f 0,rgba(18,50,40,.6) 55%,rgba(20,28,32,0) 100%),#171b21"></div>
<div class="a" style="left:1031px;top:128px;font-size:11px;line-height:14px;font-weight:bold;color:#0b0e12">13:23</div>
<svg class="a" style="left:1246px;top:129px" width="50" height="10" fill="#0b0e12"><path d="M0 7h2v2H0zM3 5h2v4H3zM6 3h2v6H6zM9 1h2v8H9z"/><rect x="13" y="2" width="3" height="7"/><rect x="18" y="2" width="3" height="7"/><rect x="22" y="2" width="2" height="7"/><rect x="30" y="1" width="18" height="8" rx="2"/></svg>
<div class="a" style="left:1221px;top:170px;font-size:11px;line-height:14px;color:#7b8285;letter-spacing:.35px">Contraer</div>
<svg class="a" style="left:1276px;top:169px" width="11" height="12"><path d="M0 1h11" stroke="#8e9497" stroke-width="1.600"/><path d="M2.500 3.500H9.500V10.500H7V7L3 11.500 1 9.500 5 6H2.500z" fill="#8e9497"/></svg>

<svg class="a" style="left:1079px;top:179px" width="160" height="160" viewBox="0 0 160 160">
<defs><clipPath id="pc"><circle cx="80" cy="80" r="41"/></clipPath></defs>
<circle cx="80" cy="80" r="72" fill="#2d7347" fill-opacity=".75"/>
<circle cx="80" cy="80" r="55" fill="#36944c"/>
<circle cx="80" cy="80" r="47" fill="#4fd05a"/>
<circle cx="80" cy="80" r="44" fill="#9fe67a"/>
<g clip-path="url(#pc)">
<rect width="160" height="160" fill="#e6e6e6"/>
<path d="M62 36l50 62M98 34l-30 42M116 66l-24 40M92 70l26 36" stroke="#bfc1c3" stroke-width="1.500" fill="none"/>
<path d="M44 124c3-10 14-14 23-17l11 8 12-8c9 3 19 6 22 17z" fill="#1a2236"/>
<path d="M66 106l11 11 10-11 4 7-13 11-15-11z" fill="#1c3a80"/><path d="M75 113h5l1 11h-7z" fill="#0d1630"/>
<path d="M60 68c0-13 6-18 14-18s15 5 15 18c0 16-6 29-15 29S60 84 60 68z" fill="#caa38c"/>
<path d="M60 78c2 6 4 4 7 5 4-2 9-2 12 0 3-1 7 1 9-5 1 14-5 29-14 29s-15-15-14-29z" fill="#766c64"/>
<path d="M70 87c3-1 6-1 8 .5-3 2-6 2-9 0z" fill="#5f3a32"/>
<path d="M58 92c-6-7-11-20-8-31 4-10 14-15 25-15 12 1 20 9 20 20 0 7-2 13-5 18-1-6 0-12-3-16-8 1-16 0-21-2-3 6-3 14-8 26z" fill="#5a5e60"/>
<path d="M65 70h6M78 70h6" stroke="#2d2523" stroke-width="1.500"/>
</g>
</svg>

<div class="a" style="left:1058px;top:359px;width:200px;text-align:center;font-size:18px;line-height:22px;color:#eef2f2">Antonio López</div>
<svg class="a" style="left:1104px;top:396px" width="18" height="14"><rect width="18" height="8" fill="#f2d94a"/><rect y="8" width="18" height="2" fill="#27326e"/><rect y="10" width="18" height="4" fill="#c8304e"/></svg>
<div class="a" style="left:1129px;top:396px;font-size:13px;line-height:16px;color:#9aa8a8;letter-spacing:.25px">+57 2 457889</div>
<div class="a" style="left:1058px;top:461px;width:200px;text-align:center;font-size:11.500px;line-height:14px;color:#dfe8e8;letter-spacing:.3px">Conectando...</div>
<div class="a" style="left:1075px;top:526px;width:167px;height:37px;border-radius:19px;background:rgba(255,255,255,.07)"></div>
<svg class="a" style="left:1114px;top:538px" width="16" height="14" fill="#5b7470"><rect width="16" height="2.200"/><rect x="2" y="4" width="12" height="2.200"/><rect x="4.500" y="8" width="7" height="2.200"/><rect x="6" y="11.800" width="4" height="2.200"/></svg>
<div class="a" style="left:1139px;top:538px;font-size:13.500px;line-height:16px;color:#5b7470;letter-spacing:.15px">Abrir CRM</div>

<div class="rb" style="left:1041px;background:#5a6a69"></div>
<svg class="a" style="left:1050px;top:610px" width="20" height="20" viewBox="0 0 20 20" fill="none" stroke="#e8ecec" stroke-width="1.500"><rect x="7" y="2" width="6" height="10" rx="3" fill="#e8ecec"/><path d="M4 9c0 4 3 6 6 6s6-2 6-6M10 15v3M7 18.500h6"/><path d="M3 2l14 15" stroke="#5a6a69" stroke-width="3"/><path d="M3 2l14 15"/></svg>
<div class="rb" style="left:1107px;background:#2c4340"></div>
<svg class="a" style="left:1118px;top:612px" width="17" height="16" fill="#7d8c8a"><circle cx="2" cy="2" r="1.700"/><circle cx="8.500" cy="2" r="1.700"/><circle cx="15" cy="2" r="1.700"/><circle cx="2" cy="8" r="1.700"/><circle cx="8.500" cy="8" r="1.700"/><circle cx="15" cy="8" r="1.700"/><circle cx="2" cy="14" r="1.700"/><circle cx="8.500" cy="14" r="1.700"/><circle cx="15" cy="14" r="1.700"/></svg>
<div class="rb" style="left:1173px;background:#2c4340"></div>
<svg class="a" style="left:1185px;top:612px" width="14" height="16" fill="#7d8c8a"><rect width="4.500" height="16"/><rect x="9.500" width="4.500" height="16"/></svg>
<div class="rb" style="left:1239px;background:#5e6a6a"></div>
<svg class="a" style="left:1247px;top:611px" width="22" height="18" fill="none"><path d="M1 6h4l6-5v16l-6-5H1z" fill="#eef1f1"/><path d="M14 5c2 2 2 6 0 8M17 3c3 3 3 9 0 12" stroke="#eef1f1" stroke-width="1.400"/></svg>
<div class="rl" style="left:1025px">Silenciar</div>
<div class="rl" style="left:1091px">Teclado</div>
<div class="rl" style="left:1156px">En espera</div>
<div class="rl" style="left:1222px">Altavoz</div>
<div class="a" style="left:1134px;top:673px;width:49px;height:49px;border-radius:50%;background:#f25555"></div>
<svg class="a" style="left:1146px;top:692px" width="26" height="10" viewBox="0 0 28 11"><path d="M1 7.500C4 1.500 9 1 14 1s10 .5 13 6.500c.4 1 0 1.800-.8 2.100l-3.300 1c-.8.200-1.500-.1-1.800-.9l-.8-2.200c-2-1-4.300-1.400-6.300-1.400s-4.300.4-6.300 1.400l-.8 2.200c-.3.800-1 1.100-1.800.9l-3.300-1C1 9.300.6 8.500 1 7.500z" fill="#fff"/></svg>
<div class="a" style="left:1105px;top:760px;width:108px;height:4px;border-radius:2px;background:#6b6e73"></div>
</body></html>
